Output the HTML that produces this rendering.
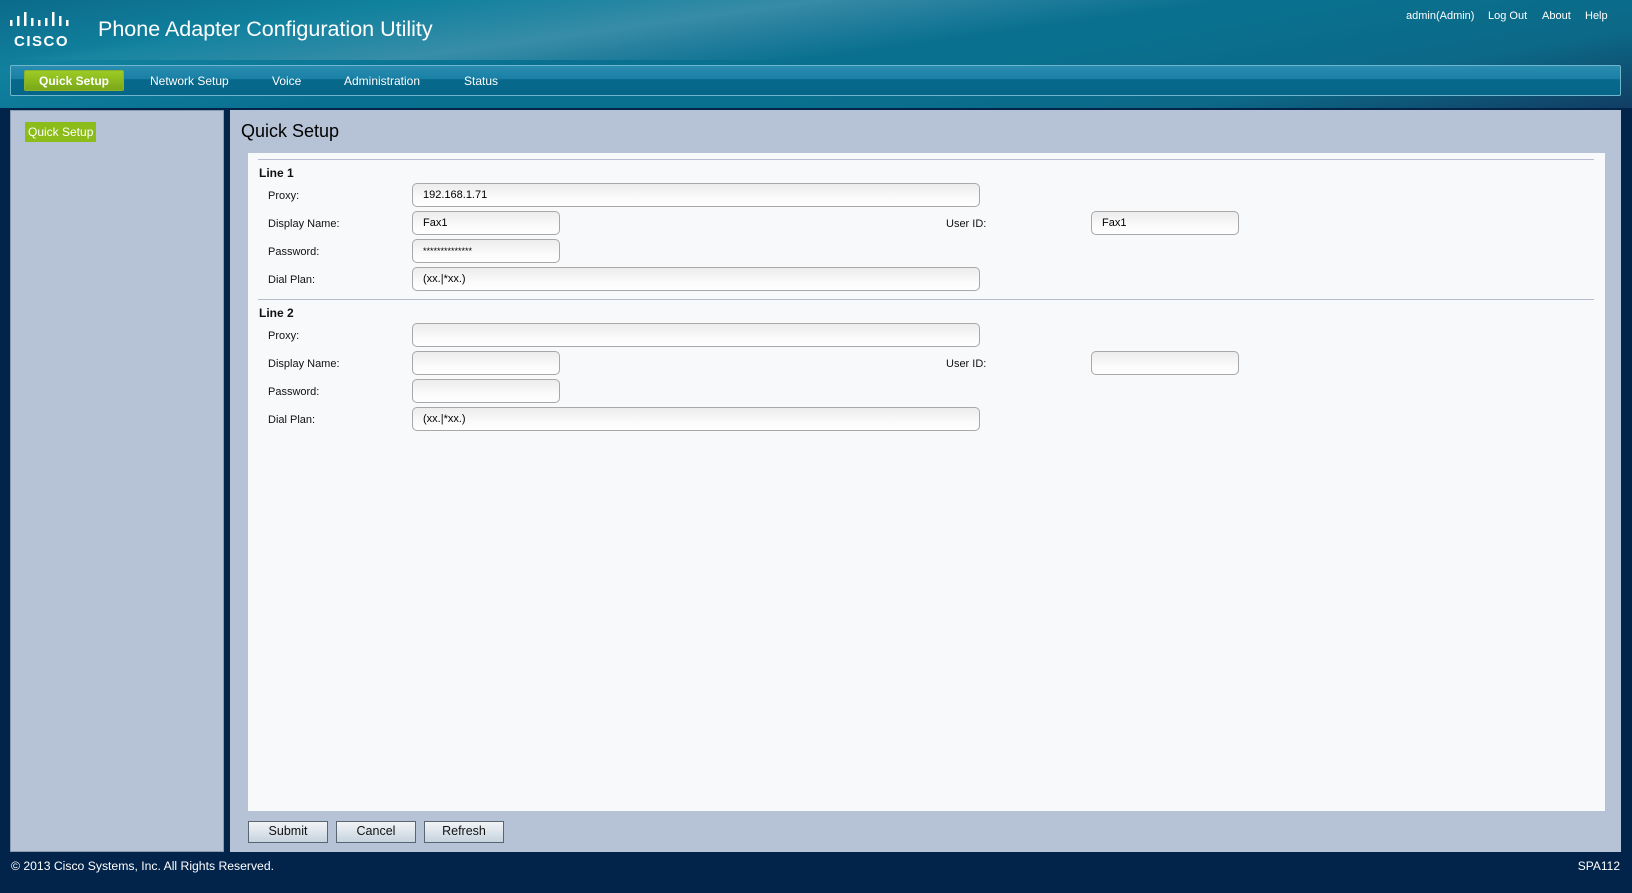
<!DOCTYPE html>
<html><head><meta charset="utf-8"><style>
*{margin:0;padding:0;box-sizing:border-box}
body{width:1632px;height:893px;overflow:hidden;font-family:"Liberation Sans",Arial,sans-serif;background:#02234a;position:relative}
.hdr{position:absolute;left:0;top:0;width:1632px;height:108px;background:linear-gradient(170deg,#0c6a8a 0%,#10819e 18%,#0a7091 40%,#09708f 60%,#0c6987 80%,#113d63 100%)}
.hdr:before{content:"";position:absolute;left:0;top:0;width:1632px;height:60px;background:linear-gradient(172deg,rgba(255,255,255,0) 20%,rgba(255,255,255,.18) 40%,rgba(255,255,255,0) 60%)}
.abs{position:absolute}
.title{left:98px;top:17px;font-size:21.5px;color:#fff}
.tl{top:10px;font-size:11px;color:#fff}
.nav{left:10px;top:65px;width:1611px;height:31px;border:1px solid #6fb7cc;border-radius:2px;background:linear-gradient(#2a8db0 0,#1980a5 45%,#07698c 46%,#06668a 100%)}
.nav span{position:absolute;top:8px;font-size:12px;color:#fff}
.qs{left:13px;top:4px;width:100px;height:21px;background:linear-gradient(#9ccb25,#7aa818);border:1px solid #8ab030;border-radius:2px}
.nav .qs span{position:static;display:block;text-align:center;font-weight:bold;line-height:20px}
.left{left:10px;top:110px;width:214px;height:742px;background:#b6c3d7;border:1px solid #8a9ab0}
.main{left:230px;top:110px;width:1391px;height:742px;background:#b6c3d7}
.white{left:248px;top:153px;width:1357px;height:658px;background:#f8f9fb}
.hr{height:1px;background:#b8bcd0;left:258px;width:1336px}
.lbl{font-size:11px;color:#111}
.b{font-weight:bold;font-size:12px}
.in{height:24px;border:1px solid #a8a8a8;border-radius:5px;background:linear-gradient(#ececec,#fafafa 60%,#fff);font-size:11px;padding-left:10px;line-height:22px;color:#000}
.btn{top:821px;width:80px;height:22px;border:1px solid #5a6572;background:linear-gradient(#f2f4f6,#c6d3df);font-size:12.5px;text-align:center;line-height:19px;color:#111}
</style></head><body>
<div class="hdr"></div>
<svg class="abs" style="left:9px;top:12px" width="66" height="36">
<g fill="#fff"><rect x="1" y="8" width="2.5" height="6"/><rect x="8" y="4" width="2.5" height="10"/><rect x="15" y="0" width="2.5" height="14"/><rect x="22" y="6" width="2.5" height="8"/><rect x="29" y="8" width="2.5" height="6"/><rect x="36" y="6" width="2.5" height="8"/><rect x="43" y="0" width="2.5" height="14"/><rect x="50" y="4" width="2.5" height="10"/><rect x="57" y="8" width="2.5" height="6"/></g>
<text x="5" y="34" font-family="Liberation Sans" font-weight="bold" font-size="15" fill="#fff" letter-spacing="1.5">CISCO</text></svg>
<div class="abs title">Phone Adapter Configuration Utility</div>
<div class="abs tl" style="left:1406px">admin(Admin)</div>
<div class="abs tl" style="left:1488px">Log Out</div>
<div class="abs tl" style="left:1542px">About</div>
<div class="abs tl" style="left:1585px">Help</div>
<div class="abs nav">
<div class="abs qs"><span>Quick Setup</span></div>
<span style="left:139px">Network Setup</span>
<span style="left:261px">Voice</span>
<span style="left:333px">Administration</span>
<span style="left:453px">Status</span>
</div>
<div class="abs left"><div class="abs" style="left:14px;top:11px;background:#8cbc1a;color:#fff;font-size:12px;padding:1px 3px;height:20px;line-height:18px">Quick Setup</div></div>
<div class="abs main"></div>
<div class="abs" style="left:241px;top:121px;font-size:18px;color:#000">Quick Setup</div>
<div class="abs white"></div>
<div class="abs hr" style="top:159px"></div>
<div class="abs lbl b" style="left:259px;top:166px">Line 1</div>
<div class="abs lbl" style="left:268px;top:190px">Proxy:</div>
<div class="abs in" style="left:412px;top:183px;width:568px">192.168.1.71</div>
<div class="abs lbl" style="left:268px;top:218px">Display Name:</div>
<div class="abs in" style="left:412px;top:211px;width:148px">Fax1</div>
<div class="abs lbl" style="left:946px;top:218px">User ID:</div>
<div class="abs in" style="left:1091px;top:211px;width:148px">Fax1</div>
<div class="abs lbl" style="left:268px;top:246px">Password:</div>
<div class="abs in" style="left:412px;top:239px;width:148px;font-size:9px">**************</div>
<div class="abs lbl" style="left:268px;top:274px">Dial Plan:</div>
<div class="abs in" style="left:412px;top:267px;width:568px">(xx.|*xx.)</div>
<div class="abs hr" style="top:299px"></div>
<div class="abs lbl b" style="left:259px;top:306px">Line 2</div>
<div class="abs lbl" style="left:268px;top:330px">Proxy:</div>
<div class="abs in" style="left:412px;top:323px;width:568px"></div>
<div class="abs lbl" style="left:268px;top:358px">Display Name:</div>
<div class="abs in" style="left:412px;top:351px;width:148px"></div>
<div class="abs lbl" style="left:946px;top:358px">User ID:</div>
<div class="abs in" style="left:1091px;top:351px;width:148px"></div>
<div class="abs lbl" style="left:268px;top:386px">Password:</div>
<div class="abs in" style="left:412px;top:379px;width:148px"></div>
<div class="abs lbl" style="left:268px;top:414px">Dial Plan:</div>
<div class="abs in" style="left:412px;top:407px;width:568px">(xx.|*xx.)</div>
<div class="abs btn" style="left:248px">Submit</div>
<div class="abs btn" style="left:336px">Cancel</div>
<div class="abs btn" style="left:424px">Refresh</div>
<div class="abs" style="left:11px;top:859px;font-size:12.2px;color:#fff">© 2013 Cisco Systems, Inc. All Rights Reserved.</div>
<div class="abs" style="right:12px;top:859px;font-size:12px;color:#fff">SPA112</div>
</body></html>
